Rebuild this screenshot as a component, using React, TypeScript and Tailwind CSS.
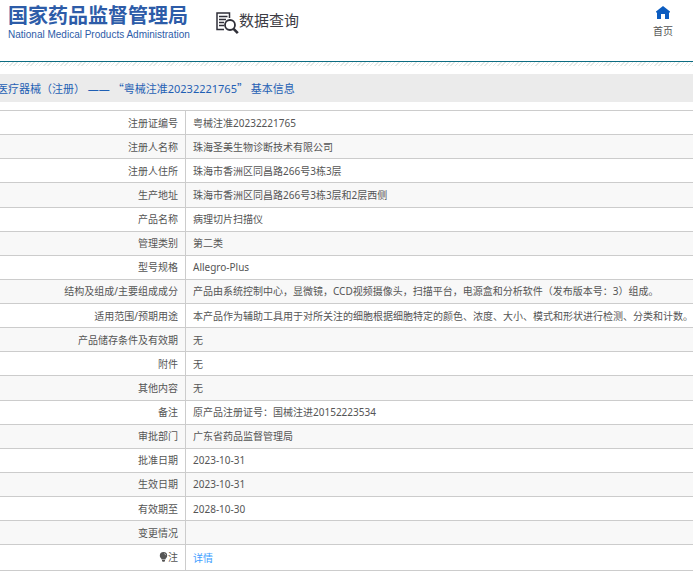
import { ReactNode } from "react";

type Row = {
  label: ReactNode;
  value: ReactNode;
};

const ROWS: Row[] = [
  { label: "注册证编号", value: "粤械注准20232221765" },
  { label: "注册人名称", value: "珠海圣美生物诊断技术有限公司" },
  { label: "注册人住所", value: "珠海市香洲区同昌路266号3栋3层" },
  { label: "生产地址", value: "珠海市香洲区同昌路266号3栋3层和2层西侧" },
  { label: "产品名称", value: "病理切片扫描仪" },
  { label: "管理类别", value: "第二类" },
  { label: "型号规格", value: "Allegro-Plus" },
  {
    label: "结构及组成/主要组成成分",
    value:
      "产品由系统控制中心，显微镜，CCD视频摄像头，扫描平台，电源盒和分析软件（发布版本号：3）组成。",
  },
  {
    label: "适用范围/预期用途",
    value:
      "本产品作为辅助工具用于对所关注的细胞根据细胞特定的颜色、浓度、大小、模式和形状进行检测、分类和计数。",
  },
  { label: "产品储存条件及有效期", value: "无" },
  { label: "附件", value: "无" },
  { label: "其他内容", value: "无" },
  { label: "备注", value: "原产品注册证号：国械注进20152223534" },
  { label: "审批部门", value: "广东省药品监督管理局" },
  { label: "批准日期", value: "2023-10-31" },
  { label: "生效日期", value: "2023-10-31" },
  { label: "有效期至", value: "2028-10-30" },
  { label: "变更情况", value: "" },
  {
    label: (
      <span className="inline-flex items-center">
        <BulbIcon />注
      </span>
    ),
    value: (
      <a href="#detail" className="text-[#409eff]">
        详情
      </a>
    ),
  },
];

function BulbIcon() {
  return (
    <svg className="h-[10px] w-[9px]" viewBox="0 0 9 10" fill="#555">
      <path d="M4.500 0a3.700 3.700 0 0 1 3.700 3.700c0 1.800-1.400 2.500-1.900 3.700H2.700C2.200 6.200 0.800 5.500 0.800 3.700A3.700 3.700 0 0 1 4.500 0z" />
      <path d="M3 7.900h3v1L5.300 9.800H3.700L3 8.900z" />
      <path d="M5.200 1.500a2 2 0 0 1 1.500 1.700" fill="none" stroke="#ddd" strokeWidth="0.700" />
    </svg>
  );
}

function SearchDocIcon() {
  return (
    <svg
      className="h-[23px] w-[23px]"
      viewBox="0 0 23 23"
      fill="none"
      stroke="#2f2f38"
    >
      <path d="M13.500 6V1H1v16.500h7" strokeWidth="1.500" />
      <path d="M3 4.500h8.500M3 7.500h7M3 10.500h5M3 13.500h5" strokeWidth="1.300" />
      <circle cx="14" cy="13" r="5" strokeWidth="1.800" />
      <path d="M17.600 16.800l4.200 4.400" strokeWidth="2.600" />
    </svg>
  );
}

function HomeIcon() {
  return (
    <svg className="h-[13px] w-[14px]" viewBox="0 0 14 13" fill="#0b5cc0">
      <path d="M7 0l7 5.500V6.500H13V13H9V8H5v5H1V6.500H0V5.500z" />
    </svg>
  );
}

export default function App() {
  return (
    <div className="w-full overflow-hidden bg-white font-['Noto_Sans','Noto_Sans_CJK_SC',sans-serif] text-[10px] text-[#555]">
      <header className="flex h-[62px] items-start justify-between border-b border-[#0c6c82] pr-5 pl-2">
        <div className="flex">
          <div className="w-[208px] pt-1 whitespace-nowrap text-[#2d5ca8]">
            <div className="text-[20px] leading-[24px] font-bold">
              国家药品监督管理局
            </div>
            <div className="font-['Liberation_Sans',sans-serif] text-[10px] leading-[14px]">
              National Medical Products Administration
            </div>
          </div>
          <div className="flex pt-3 text-[#3c3c44]">
            <SearchDocIcon />
            <span className="text-[15px] leading-[16px]">数据查询</span>
          </div>
        </div>
        <a href="#home" className="flex flex-col items-center pt-[6px]">
          <HomeIcon />
          <span className="mt-1 leading-[16px]">首页</span>
        </a>
      </header>

      <div className="h-1 bg-[repeating-linear-gradient(135deg,#e3e9e6_0px,#e3e9e6_1px,#fff_1px,#fff_3px)]" />

      <h1 className="-ml-[3px] mt-2 h-7 bg-[#ebebeb] text-[11px] leading-[28px] whitespace-nowrap text-[#1f5fb4]">
        医疗器械（注册） ——{" "}
        <span className="font-['Noto_Sans_CJK_SC',sans-serif]">“</span>
        粤械注准20232221765
        <span className="font-['Noto_Sans_CJK_SC',sans-serif]">”</span>{" "}
        基本信息
      </h1>

      <table className="mt-2 h-[461px] w-full border-collapse">
        <tbody>
          {ROWS.map((row, index) => (
            <tr key={index} className="border-y border-[#ccc] even:bg-[#f8f8f8]">
              <th
                scope="row"
                className="w-[186px] border-r border-[#ccc] pr-[7px] text-right leading-[14px] font-normal whitespace-nowrap"
              >
                {row.label}
              </th>
              <td className="pl-[7px] leading-[14px] whitespace-nowrap">
                {row.value}
              </td>
            </tr>
          ))}
        </tbody>
      </table>
    </div>
  );
}
